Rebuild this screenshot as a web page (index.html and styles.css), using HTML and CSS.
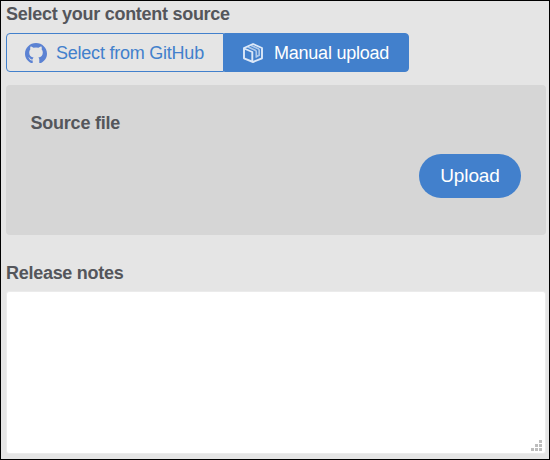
FILE: index.html
```html
<!DOCTYPE html>
<html lang="en">
<head>
<meta charset="utf-8">
<title>Content source</title>
<link rel="stylesheet" href="styles.css">
</head>
<body>
<main class="page">
  <h2 class="heading">Select your content source</h2>
  <div class="tabs">
    <button class="tab tab-github" type="button">
      <svg class="icon icon-github" viewBox="0 0 22 20"><path fill="currentColor" d="M7.7 20H6C2.400 18.200 0 15 0 10.800 0 4.800 4.900 0 11 0s11 4.800 11 10.800c0 4.200-2.400 7.400-6 9.200h-1.700v-3.200c0-1-.3-1.800-.9-2.200 2.800-.4 4.400-1.900 4.400-5 0-1.300-.4-2.300-1.100-3.100.2-.9.2-1.900-.2-2.900-1.100 0-2.100.6-2.900 1.200a10 10 0 0 0-5.200 0C7.600 4.200 6.600 3.600 5.500 3.600c-.4 1-.4 2-.2 2.900-.7.800-1.100 1.800-1.100 3.100 0 3.100 1.600 4.600 4.400 5-.5.4-.8.9-.9 1.600-1.400.5-2.300 0-3-1.100-.4-.6-.9-.9-1.500-.8.900.5 1.100 1.500 1.600 2.300.6.900 1.600 1.200 2.900.9z"/></svg>
      <span>Select from GitHub</span>
    </button>
    <button class="tab tab-manual" type="button">
      <svg class="icon icon-box" viewBox="0 0 20 20" fill="none" stroke="currentColor" stroke-linejoin="round">
        <path class="box-edge" d="M10 1 19 5v10.300L10 19 1 15.300V5z"/>
        <path class="box-edge" d="M1.200 5.500 9.300 9v9.500"/>
        <path class="box-fold" d="M4.500 3.800 12.300 7.200q1 .5 1 1.600v6M8.200 2.500l7 3.300q1 .5 1 1.600v4.800l-2.500 1.300"/>
      </svg>
      <span>Manual upload</span>
    </button>
  </div>
  <section class="panel">
    <h2 class="heading">Source file</h2>
    <button class="upload" type="button">Upload</button>
  </section>
  <h2 class="heading">Release notes</h2>
  <div class="notes">
    <textarea class="notes-input" aria-label="Release notes"></textarea>
    <svg class="grip" viewBox="0 0 11 11" fill="#bdbdbd"><path d="M8 0h3v3H8zM4 4h3v3H4zM8 4h3v3H8zM0 8h3v3H0zM4 8h3v3H4zM8 8h3v3H8z"/></svg>
  </div>
</main>
</body>
</html>
```
FILE: styles.css
```css
* { box-sizing: border-box; }
body { margin: 0; font-family: "Liberation Sans", Arial, sans-serif; }
button { font: inherit; margin: 0; padding: 0; border: 0; }
.page {
  width: 550px;
  height: 460px;
  padding: 2px 3px 5px 5px;
  border: 1px solid #000;
  background: #e5e5e5;
}
.heading {
  margin: 0;
  font-size: 18px;
  line-height: 22px;
  letter-spacing: -0.28px;
  color: #54565b;
}
.tabs { display: flex; height: 39px; margin: 8px 0 13px; }
.tab {
  display: flex;
  align-items: center;
  border: 1px solid #4280cc;
  font-size: 18px;
  letter-spacing: -0.23px;
  color: #4280cc;
  background: transparent;
}
.tab span { padding-top: 2px; }
.tab-github { width: 218px; padding-left: 18px; gap: 9px; border-radius: 4px 0 0 4px; }
.tab-manual { width: 185px; padding-left: 18px; gap: 11px; border-radius: 0 4px 4px 0; background: #4280cc; color: #fff; }
.icon { flex: none; }
.icon-github { width: 22px; height: 20px; margin-top: 1px; color: #5b82d3; }
.icon-box { width: 20px; height: 20px; margin-top: 1px; color: #dce8f8; }
.box-edge { stroke-width: 1.9; }
.box-fold { stroke-width: 1.7; opacity: .7; }
.panel {
  display: flex;
  flex-direction: column;
  width: 540px;
  height: 150px;
  margin-bottom: 27px;
  padding: 27px 25px 0 24.5px;
  border-radius: 4px;
  background: #d6d6d6;
}
.panel .heading { letter-spacing: -0.22px; }
.upload {
  align-self: flex-end;
  width: 102px;
  height: 44px;
  margin-top: 20px;
  border-radius: 22px;
  background: #4280cc;
  color: #fff;
  font-size: 19px;
  letter-spacing: -0.1px;
}
.notes { position: relative; width: 540px; height: 163px; margin-top: 7px; }
.notes-input {
  display: block;
  width: 100%;
  height: 100%;
  border: 1px solid #ebebeb;
  border-radius: 3px;
  background: #fff;
  resize: none;
}
.grip { position: absolute; right: 4px; bottom: 3px; width: 11px; height: 11px; }
```
